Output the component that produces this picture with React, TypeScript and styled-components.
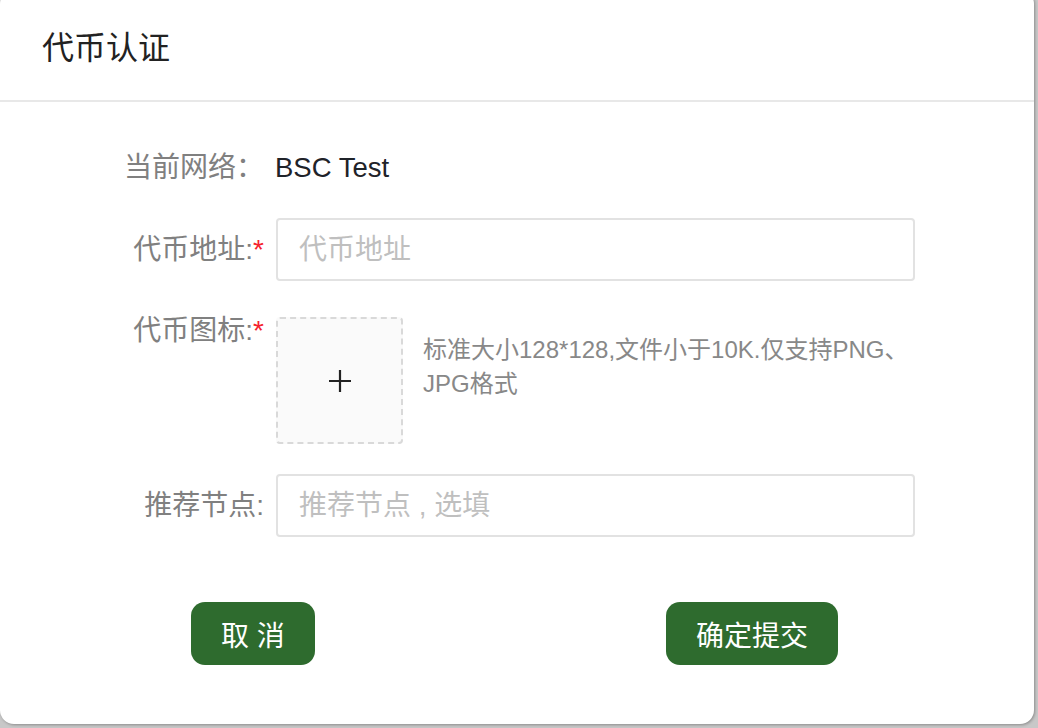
import React from 'react';
import styled, { createGlobalStyle } from 'styled-components';

const GlobalStyle = createGlobalStyle`
	html, body {
		margin: 0;
		padding: 0;
		background: #c8c8c8;
		overflow: hidden;
	}
	body {
		font-family: 'Liberation Sans', 'Noto Sans CJK SC', sans-serif;
	}
`;

const Page = styled.div`
	width: 1038px;
	height: 728px;
	overflow: hidden;
`;

const Card = styled.div`
	width: 1034px;
	height: 734px;
	margin-top: -10px;
	background: #fff;
	border-radius: 14px;
	box-shadow: 1px 1px 3px rgba(0, 0, 0, 0.3);
	display: flex;
	flex-direction: column;
`;

const Header = styled.div`
	height: 112px;
	box-sizing: border-box;
	padding-left: 42px;
	display: flex;
	align-items: center;
	border-bottom: 2px solid #e8e8e8;
	font-size: 32px;
	color: #222;
`;

const Body = styled.div`
	padding-top: 34px;
	display: flex;
	flex-direction: column;
`;

const FormItem = styled.div<{ $space: number; $top?: boolean; $height?: number }>`
	display: flex;
	align-items: ${(p) => (p.$top ? 'flex-start' : 'center')};
	height: ${(p) => (p.$height ? `${p.$height}px` : 'auto')};
	margin-bottom: ${(p) => p.$space}px;
	font-size: 28px;
`;

const Label = styled.div`
	width: 264px;
	flex: none;
	text-align: right;
	color: #808080;
	line-height: 28px;
`;

const Required = styled.span`
	color: #f5222d;
`;

const Value = styled.div`
	margin-left: 11px;
	color: #1f2329;
	font-size: 27.5px;
`;

const Input = styled.input`
	margin-left: 12px;
	width: 639px;
	height: 63px;
	box-sizing: border-box;
	border: 2px solid #e2e2e2;
	border-radius: 4px;
	padding: 0 21px;
	font-family: inherit;
	font-size: 28px;
	color: #333;
	outline: none;
	&::placeholder {
		color: #bfbfbf;
	}
`;

const UploadBox = styled.div`
	margin-left: 12px;
	width: 127px;
	height: 127px;
	box-sizing: border-box;
	flex: none;
	border: 2px dashed #d9d9d9;
	border-radius: 4px;
	background: #fafafa;
	display: flex;
	align-items: center;
	justify-content: center;
`;

const Hint = styled.div`
	margin-left: 20px;
	margin-top: 16px;
	width: 492px;
	font-size: 24px;
	line-height: 34px;
	color: #888;
`;

const Actions = styled.div`
	display: flex;
	justify-content: space-between;
	padding: 0 196px 0 191px;
`;

const Button = styled.button`
	height: 63px;
	padding: 0 30px;
	border: none;
	border-radius: 14px;
	background: #2e6b2e;
	color: #fff;
	font-family: inherit;
	font-size: 28px;
	cursor: pointer;
`;

const PlusIcon = () => (
	<svg width="24" height="24" viewBox="0 0 24 24">
		<path d="M12 1v22M1 12h22" stroke="#222" strokeWidth="2.2" fill="none" />
	</svg>
);

const App = () => (
	<Page>
		<GlobalStyle />
		<Card>
			<Header>代币认证</Header>
			<Body>
				<FormItem $space={19} $height={63}>
					<Label>当前网络：</Label>
					<Value>BSC Test</Value>
				</FormItem>
				<FormItem $space={36}>
					<Label>
						代币地址:<Required>*</Required>
					</Label>
					<Input placeholder="代币地址" />
				</FormItem>
				<FormItem $space={30} $top>
					<Label>
						代币图标:<Required>*</Required>
					</Label>
					<UploadBox>
						<PlusIcon />
					</UploadBox>
					<Hint>标准大小128*128,文件小于10K.仅支持PNG、JPG格式</Hint>
				</FormItem>
				<FormItem $space={65}>
					<Label>推荐节点:</Label>
					<Input placeholder="推荐节点 , 选填" />
				</FormItem>
				<Actions>
					<Button>取 消</Button>
					<Button>确定提交</Button>
				</Actions>
			</Body>
		</Card>
	</Page>
);

export default App;
